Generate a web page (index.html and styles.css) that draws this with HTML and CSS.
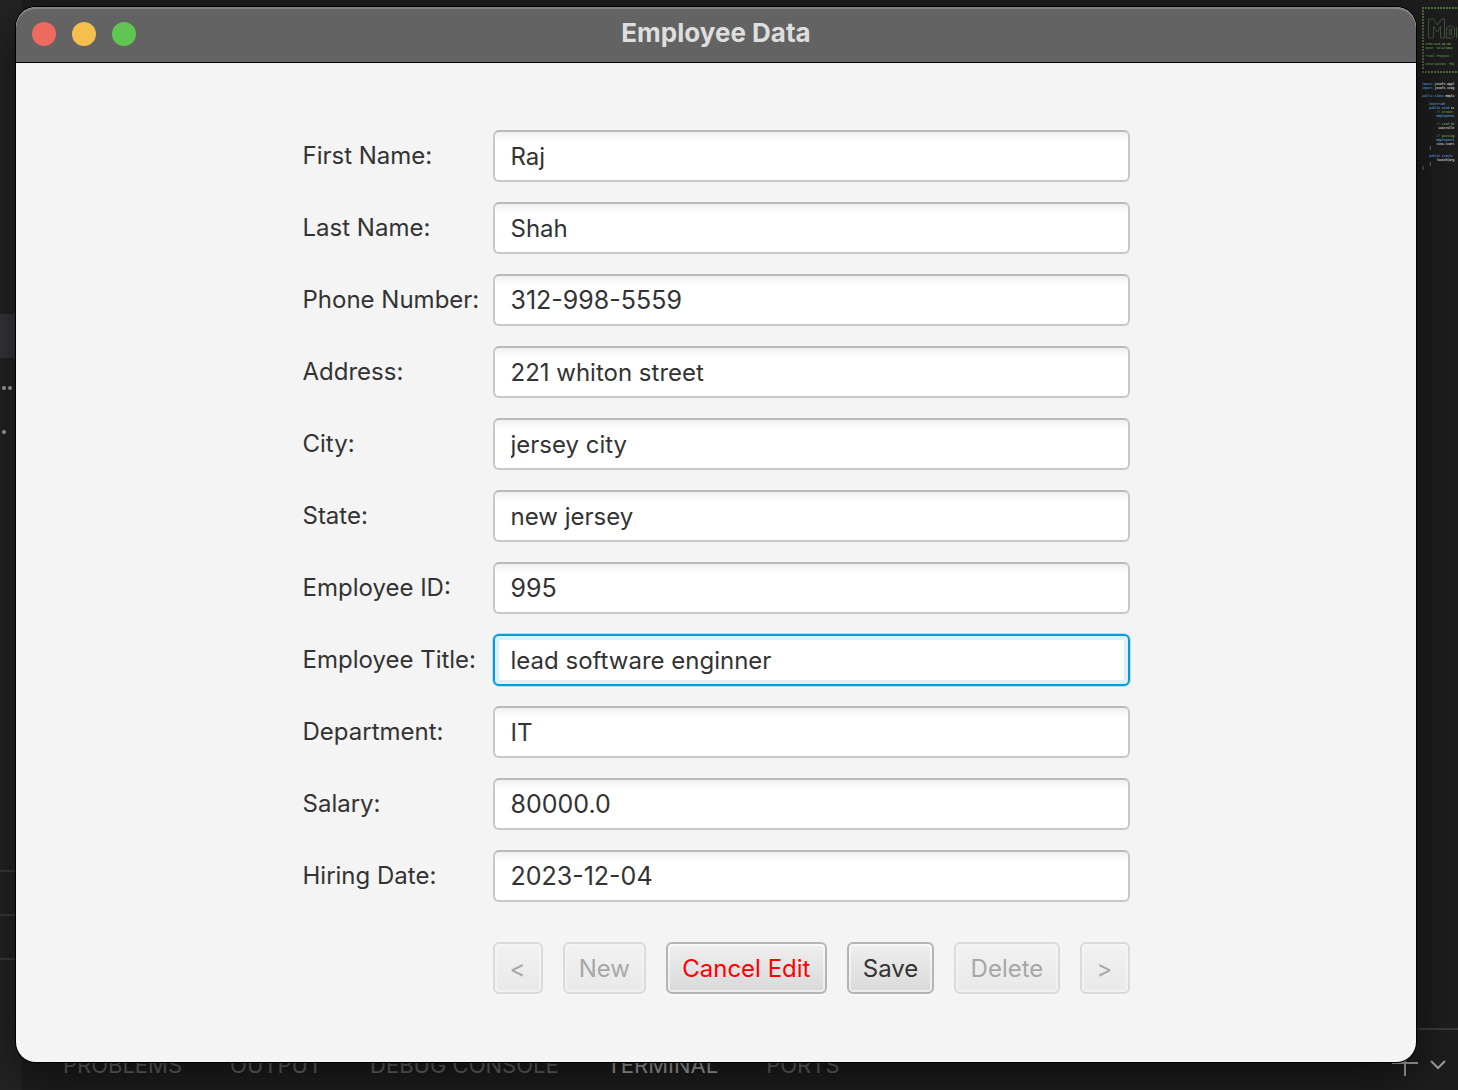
FILE: index.html
```html
<!DOCTYPE html>
<html lang="en">
<head>
<meta charset="utf-8">
<meta name="viewport" content="width=device-width, initial-scale=1">
<title>Employee Data</title>
<link rel="stylesheet" href="styles.css">
</head>
<body>
<div class="editor">
  <div class="explorer">
    <div class="explorer-row selected"></div>
    <div class="explorer-row"><i class="dot"></i><i class="dot"></i></div>
    <div class="explorer-row"><i class="dot"></i></div>
    <div class="explorer-sections">
      <div class="explorer-section"></div>
      <div class="explorer-section"></div>
      <div class="explorer-section"></div>
    </div>
  </div>
  <div class="workbench">
    <pre class="minimap"><svg class="banner" width="36" height="68" viewBox="0 0 36 68" aria-hidden="true"><path class="rule" d="M0 2h36M0 66h36M1 4v60"/><path d="M6.500 32V13h5l4 6 4-6h3v19h-4V20l-3 6-4-6v12zM24.500 32v-10l3-2h2l3 2v8l-3 2zM27.500 29v-6h2v6zM34.500 32V21"/></svg><span class="comment header">  CTMS-618-65-66
  Date: 12/4/2023

  Final Project :

  Description: Thi</span>



<span class="keyword">import</span> javafx.appl
<span class="keyword">import</span> javafx.stag

<span class="keyword">public class</span> Emplo

    <span class="keyword">@Override</span>
    <span class="keyword">public void</span> st
        <span class="comment">// Create</span>
        <span class="keyword">EmployeeCo</span>

        <span class="comment">// Load da</span>
         controlle

        <span class="comment">// passing</span>
        <span class="keyword">EmployeeVi</span>
        view.start
    }

    <span class="keyword">public static</span>
        launch(arg
    }
}</pre>
    <div class="panel">
      <nav class="tabs">
        <a href="#problems">PROBLEMS</a>
        <a href="#output">OUTPUT</a>
        <a href="#console">DEBUG CONSOLE</a>
        <a href="#terminal" class="current">TERMINAL</a>
        <a href="#ports">PORTS</a>
      </nav>
      <div class="panel-actions">
        <button type="button" aria-label="New terminal"><svg width="26" height="26" viewBox="0 0 26 26"><path d="M13 0v26M0 13h26"/></svg></button>
        <button type="button" aria-label="Terminal menu"><svg width="16" height="26" viewBox="0 0 16 26"><path d="M1 11l7 7 7-7"/></svg></button>
      </div>
    </div>
  </div>
</div>

<main class="window">
  <header class="titlebar">
    <div class="lights">
      <button type="button" class="light close" aria-label="Close"></button>
      <button type="button" class="light minimize" aria-label="Minimize"></button>
      <button type="button" class="light zoom" aria-label="Zoom"></button>
    </div>
    <h1>Employee Data</h1>
  </header>
  <form class="employee">
    <label for="first">First Name:</label><input id="first" type="text" value="Raj">
    <label for="last">Last Name:</label><input id="last" type="text" value="Shah">
    <label for="phone">Phone Number:</label><input id="phone" class="numeric" type="text" value="312-998-5559">
    <label for="address">Address:</label><input id="address" type="text" value="221 whiton street">
    <label for="city">City:</label><input id="city" type="text" value="jersey city">
    <label for="state">State:</label><input id="state" type="text" value="new jersey">
    <label for="eid">Employee ID:</label><input id="eid" class="numeric" type="text" value="995">
    <label for="etitle">Employee Title:</label><input id="etitle" class="focused" type="text" value="lead software enginner">
    <label for="dept">Department:</label><input id="dept" type="text" value="IT">
    <label for="salary">Salary:</label><input id="salary" class="numeric" type="text" value="80000.0">
    <label for="hired">Hiring Date:</label><input id="hired" class="numeric" type="text" value="2023-12-04">
    <div class="actions">
      <button type="button" class="step" disabled>&lt;</button>
      <button type="button" disabled>New</button>
      <button type="button" class="cancel">Cancel Edit</button>
      <button type="button">Save</button>
      <button type="button" disabled>Delete</button>
      <button type="button" class="step" disabled>&gt;</button>
    </div>
  </form>
</main>
</body>
</html>
```
FILE: styles.css
```css
* { box-sizing: border-box; }

body {
  margin: 0;
  min-height: 100vh;
  display: grid;
  grid-template-columns: minmax(0, 1fr);
  background: #1e1e1e;
  font-family: Inter, "Liberation Sans", sans-serif;
}

.editor, .window { grid-area: 1 / 1; }

/* Code editor behind the window */
.editor {
  display: grid;
  grid-template-columns: 22px minmax(0, 1fr);
}

.explorer {
  display: flex;
  flex-direction: column;
  padding-top: 314px;
  background: #242424;
}

.explorer-row {
  display: flex;
  align-items: center;
  gap: 2px;
  height: 44px;
  padding: 16px 2px 0;
}

.explorer-row.selected { background: #37373d; }

.dot {
  width: 4px;
  height: 4px;
  border-radius: 50%;
  background: #a8a8a8;
}

.explorer-sections {
  margin-top: auto;
  padding-bottom: 88px;
}

.explorer-section {
  height: 44px;
  border-top: 2px solid #3c3c3c;
}

.workbench {
  display: flex;
  flex-direction: column;
  justify-content: space-between;
}

.minimap {
  align-self: flex-end;
  width: 36px;
  margin: 6px 0 0;
  font: bold 3px/4px "Liberation Mono", monospace;
  color: #d4d4d4;
}

.comment { color: #6a9955; }
.keyword { color: #569cd6; }

.header {
  display: block;
  margin-top: -31px;
}

.banner {
  display: block;
  fill: none;
  stroke: #40553a;
}

.banner .rule {
  stroke: #4d6f3e;
  stroke-width: 2;
  stroke-dasharray: 2 1;
}

.panel {
  display: flex;
  justify-content: space-between;
  height: 62px;
  padding: 20px 12px 0 41px;
  border-top: 2px solid #3c3c3c;
}

.tabs {
  display: flex;
  gap: 48px;
  padding-top: 2px;
  font-size: 22px;
  line-height: 26px;
}

.tabs a {
  color: #686868;
  text-decoration: none;
}

.tabs .current { color: #aaaaaa; }

.panel-actions {
  display: flex;
  align-items: flex-start;
  gap: 12px;
}

.panel-actions button {
  display: flex;
  padding: 0;
  border: 0;
  background: none;
}

.panel-actions svg {
  fill: none;
  stroke: #a0a0a0;
  stroke-width: 2;
}

/* Application window */
.window {
  z-index: 1;
  margin: 7px 42px 28px 16px;
  overflow: hidden;
  border-radius: 20px;
  background: #f4f4f4;
  box-shadow: 0 0 0 1px #000, 0 12px 50px rgba(0, 0, 0, .6);
}

.titlebar {
  display: grid;
  grid-template-columns: 1fr auto 1fr;
  align-items: center;
  height: 56px;
  padding: 0 16px 2px;
  border-bottom: 1px solid #000;
  border-radius: 20px 20px 0 0;
  background: #636363;
  box-shadow: inset 0 2px 0 #828282;
}

.titlebar h1 {
  margin: 0;
  padding-bottom: 2px;
  font-size: 26px;
  line-height: 32px;
  font-weight: 700;
  color: #dedede;
}

.lights {
  display: flex;
  gap: 16px;
}

.light {
  width: 24px;
  height: 24px;
  padding: 0;
  border: 0;
  border-radius: 50%;
}

.close { background: #ed6a5e; }
.minimize { background: #f5bf4f; }
.zoom { background: #61c554; }

.employee {
  display: grid;
  grid-template-columns: 170px minmax(0, 637px);
  justify-content: center;
  align-items: center;
  gap: 20px;
  padding: 67px 20px 68px;
  font-size: 24px;
  color: #333333;
}

label {
  line-height: 32px;
  white-space: nowrap;
}

input {
  width: 100%;
  height: 52px;
  padding: 0 16px;
  border: 2px solid #c8c8c8;
  border-top-color: #b9b9b9;
  border-radius: 6px;
  background: linear-gradient(#f0f0f0, #ffffff 10px);
  font: inherit;
  color: inherit;
}

input.numeric { font-size: 25px; }

input.focused {
  border-color: #039ed3;
  background: #ffffff;
  box-shadow: 0 0 0 1px #b9dfec, inset 0 0 0 4px #dff1f8;
}

.actions {
  grid-column: 2;
  display: flex;
  gap: 20px;
  margin-top: 20px;
}

.actions button {
  flex: 1 1 auto;
  height: 52px;
  padding: 0 10px;
  border: 2px solid #b5b5b5;
  border-radius: 6px;
  background: linear-gradient(#efefef, #d9d9d9);
  box-shadow: inset 0 0 0 2px rgba(255, 255, 255, .5), 0 2px 0 #f9f9f9;
  font: inherit;
  color: #333333;
}

.actions .step {
  flex: 0 0 50px;
  padding: 0;
}

.actions .cancel { color: #ff0000; }
.actions button:disabled { opacity: .4; }
```
